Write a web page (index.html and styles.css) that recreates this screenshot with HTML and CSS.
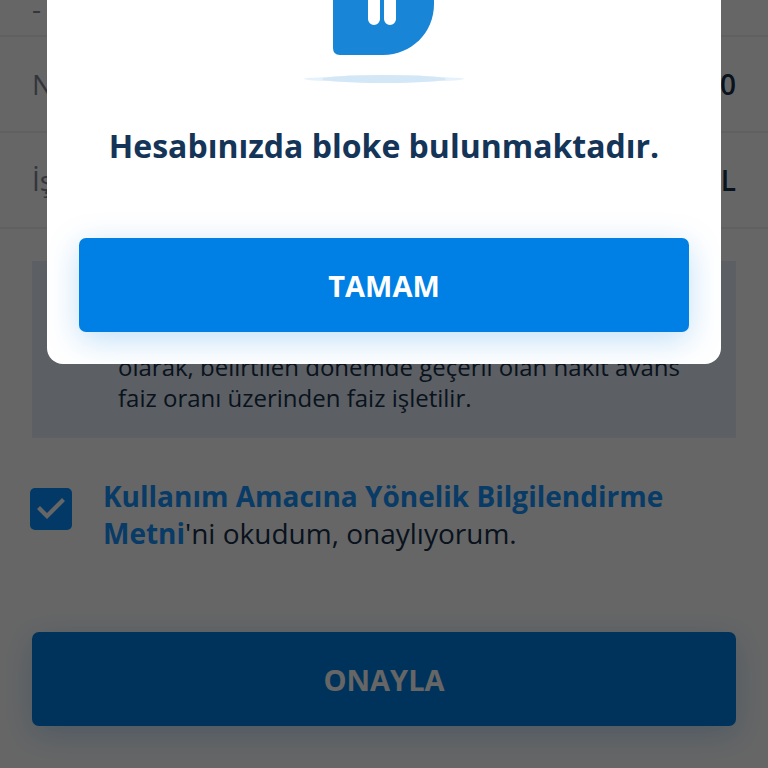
FILE: index.html
```html
<!DOCTYPE html>
<html lang="tr">
<head>
    <meta charset="UTF-8">
    <meta name="viewport" content="width=device-width, initial-scale=1.0">
    <title>Nakit Avans</title>
    <link rel="stylesheet" href="styles.css">
</head>
<body>
    <main class="page">
        <dl class="details">
            <div class="row row-first">
                <dt>-</dt>
            </div>
            <div class="row">
                <dt>Na</dt>
                <dd>0</dd>
            </div>
            <div class="row">
                <dt>İş</dt>
                <dd>L</dd>
            </div>
        </dl>
        <div class="info">
            <p>olarak, belirtilen dönemde geçerli olan nakit avans faiz oranı üzerinden faiz işletilir.</p>
        </div>
        <div class="consent">
            <input type="checkbox" id="consent" class="checkbox" checked>
            <label for="consent"><a href="#">Kullanım Amacına Yönelik Bilgilendirme Metni</a>'ni okudum, onaylıyorum.</label>
        </div>
        <button type="button" class="button">ONAYLA</button>
    </main>

    <div class="overlay">
        <div class="modal" role="dialog" aria-labelledby="modal-title">
            <svg class="modal-icon" width="160" height="84" viewBox="0 0 160 84" aria-hidden="true">
                <path d="M29 0H130V4C130 33 107 55 79 55H36Q29 55 29 48Z" fill="#1985d6"/>
                <path d="M64 0H76V19A6 6 0 0 1 64 19ZM80 0H92V19A6 6 0 0 1 80 19Z" fill="#fff"/>
                <ellipse cx="80" cy="79" rx="80" ry="3" fill="#e6f2fb"/>
                <ellipse cx="80" cy="79" rx="62" ry="4" fill="#d3e7f7"/>
            </svg>
            <h1 class="modal-title" id="modal-title">Hesabınızda bloke bulunmaktadır.</h1>
            <button type="button" class="button">TAMAM</button>
        </div>
    </div>
</body>
</html>
```
FILE: styles.css
```css
* {
    box-sizing: border-box;
}

body {
    margin: 0;
    font-family: "Open Sans", "Noto Sans", sans-serif;
    background: #fff;
    color: #16304d;
}

.details {
    margin: 0 0 32px;
}

.row {
    display: flex;
    justify-content: space-between;
    align-items: center;
    height: 96px;
    padding: 0 32px;
    border-bottom: 2px solid #f0f0f0;
    font-size: 28px;
}

.row-first {
    height: 37px;
    align-items: flex-end;
    padding-bottom: 8px;
}

.row dt {
    color: #7d8793;
}

.row dd {
    margin: 0;
    font-weight: 600;
}

.info {
    margin: 0 32px;
    padding: 90px 48px 25px 86px;
    background: #e6eef7;
}

.info p {
    margin: 0;
    font-size: 24px;
    line-height: 31px;
}

.consent {
    display: flex;
    align-items: flex-start;
    gap: 31px;
    padding: 40px 30px 0;
    font-size: 28px;
    line-height: 37px;
}

.checkbox {
    appearance: none;
    flex: none;
    display: grid;
    place-items: center;
    width: 42px;
    height: 42px;
    margin: 10px 0 0;
    border-radius: 5px;
    background: #058eff;
}

.checkbox:checked::before {
    content: "";
    width: 28px;
    height: 22px;
    background: #fff;
    clip-path: polygon(0 11px, 3px 8px, 10px 15px, 25px 0, 28px 3px, 10px 21px);
}

.consent a {
    color: #1494ff;
    font-weight: 700;
    text-decoration: none;
}

.page > .button {
    width: calc(100% - 64px);
    margin: 80px 32px 42px;
}

.button {
    display: block;
    width: 100%;
    height: 94px;
    border: none;
    border-radius: 7px;
    background: #007fe4;
    box-shadow: 0 8px 32px rgba(0, 127, 228, 0.25);
    color: #fff;
    font-family: inherit;
    font-size: 29px;
    font-weight: 700;
    cursor: pointer;
}

.overlay {
    position: fixed;
    inset: 0;
    padding: 0 47px;
    background: rgba(0, 0, 0, 0.6);
}

.modal {
    padding: 0 32px 32px;
    border-radius: 0 0 16px 16px;
    background: #fff;
    overflow: hidden;
    text-align: center;
}

.modal-icon {
    display: block;
    margin: 0 auto;
}

.modal-title {
    margin: 40px 0 70px;
    color: #143557;
    font-size: 32px;
    font-weight: 700;
    line-height: 44px;
}
```
